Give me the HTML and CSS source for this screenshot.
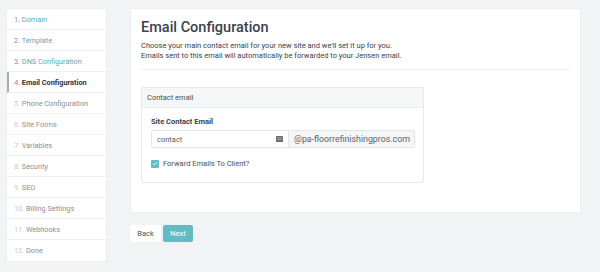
FILE: index.html
```html
<!DOCTYPE html>
<html>
<head>
<meta charset="utf-8">
<link rel="stylesheet" href="styles.css">
</head>
<body>
<div class="page">
  <ul class="steps">
    <li class="step done"><span class="num">1.</span> Domain</li>
    <li class="step done"><span class="num">2.</span> Template</li>
    <li class="step done"><span class="num">3.</span> DNS Configuration</li>
    <li class="step active"><span class="num">4.</span> Email Configuration</li>
    <li class="step"><span class="num">5.</span> Phone Configuration</li>
    <li class="step"><span class="num">6.</span> Site Forms</li>
    <li class="step"><span class="num">7.</span> Variables</li>
    <li class="step"><span class="num">8.</span> Security</li>
    <li class="step"><span class="num">9.</span> SEO</li>
    <li class="step"><span class="num">10.</span> Billing Settings</li>
    <li class="step"><span class="num">11.</span> Webhooks</li>
    <li class="step"><span class="num">12.</span> Done</li>
  </ul>
  <div class="main">
    <div class="panel">
      <h1 class="title">Email Configuration</h1>
      <p class="desc">Choose your main contact email for your new site and we'll set it up for you.<br>Emails sent to this email will automatically be forwarded to your Jensen email.</p>
      <hr class="sep">
      <div class="box">
        <div class="box-head">Contact email</div>
        <div class="box-body">
          <div class="label">Site Contact Email</div>
          <div class="input-row">
            <div class="input">
              <span class="value">contact</span>
              <svg class="key" width="7" height="6" viewBox="0 0 7 6"><rect x="0" y="0" width="7" height="6" rx="0.5" fill="#6b6f75"/><rect x="1" y="1.6" width="5" height="0.6" fill="#b9bcc0"/><rect x="1" y="3.4" width="5" height="0.6" fill="#b9bcc0"/></svg>
            </div>
            <div class="addon">@pa-floorrefinishingpros.com</div>
          </div>
          <label class="check">
            <span class="box-check"><svg width="6" height="5" viewBox="0 0 6 5"><path d="M1 2.6 L2.4 3.8 L5 1.2" fill="none" stroke="#fff" stroke-width="0.9"/></svg></span>
            Forward Emails To Client?
          </label>
        </div>
      </div>
    </div>
    <div class="buttons">
      <button class="btn back">Back</button>
      <button class="btn next">Next</button>
    </div>
  </div>
</div>
</body>
</html>
```
FILE: styles.css
```css
html, body {
  margin: 0;
  padding: 0;
  background: #f2f3f5;
  font-family: Roboto, "Liberation Sans", Arial, sans-serif;
}
.page {
  display: flex;
  align-items: flex-start;
  gap: 23px;
  padding: 8px 0 0 6px;
}
.steps {
  list-style: none;
  margin: 0;
  padding: 0;
  width: 101px;
  background: #fff;
  border: 1px solid #eceef0;
  box-sizing: border-box;
}
.step {
  height: 21px;
  line-height: 21px;
  font-size: 7.3px;
  color: #8a8f96;
  padding-left: 7px;
  border-bottom: 1px solid #eef0f2;
  box-sizing: border-box;
  white-space: nowrap;
}
.step:last-child { border-bottom: none; }
.step .num { color: #c7cacf; }
.step.done { color: #5fa9b2; }
.step.done .num { color: #8a8f96; }
.step.active {
  color: #2f343b;
  font-weight: 700;
  border-left: 2px solid #a8acb2;
  padding-left: 5px;
}
.step.active .num { color: #8a8f96; font-weight: 400; }
.main {
  width: 451px;
  display: flex;
  flex-direction: column;
  gap: 12px;
}
.panel {
  background: #fff;
  border: 1px solid #eceef0;
  box-sizing: border-box;
  height: 205px;
  padding: 8px 10px 0;
}
.title {
  margin: 0;
  font-size: 14.5px;
  font-weight: 500;
  color: #3a4150;
  line-height: 22px;
}
.desc {
  margin: 2px 0 0;
  font-size: 7.5px;
  line-height: 10px;
  color: #3a4150;
}
.sep {
  border: none;
  border-top: 1px solid #eef0f2;
  margin: 8px 0 0;
}
.box {
  margin-top: 17px;
  width: 283px;
  border: 1px solid #e6e8eb;
  border-radius: 2px;
  box-sizing: border-box;
}
.box-head {
  height: 19px;
  line-height: 19px;
  background: #f5f6f7;
  font-size: 7.5px;
  color: #4a505a;
  padding-left: 5px;
  border-bottom: 1px solid #eceef0;
}
.box-body {
  padding: 8px 8px 14px 9px;
}
.label {
  font-size: 7.5px;
  font-weight: 700;
  color: #3a4150;
  line-height: 12px;
}
.input-row {
  display: flex;
  margin-top: 2px;
  height: 18px;
  width: 264px;
}
.input {
  width: 138px;
  border: 1px solid #e3e5e8;
  border-radius: 2px 0 0 2px;
  box-sizing: border-box;
  display: flex;
  align-items: center;
  justify-content: space-between;
  padding: 0 5px;
  background: #fff;
}
.value {
  font-size: 7.5px;
  color: #555a62;
}
.key { display: block; }
.addon {
  flex: 1;
  background: #f5f6f7;
  border: 1px solid #e3e5e8;
  border-left: none;
  border-radius: 0 2px 2px 0;
  font-size: 8.8px;
  color: #5d626a;
  line-height: 16px;
  padding-left: 5px;
  white-space: nowrap;
  overflow: hidden;
}
.check {
  display: flex;
  align-items: center;
  gap: 4px;
  margin-top: 11px;
  font-size: 7.5px;
  color: #4a505a;
}
.box-check {
  width: 8px;
  height: 8px;
  background: #62bcc4;
  border-radius: 1px;
  display: flex;
  align-items: center;
  justify-content: center;
}
.box-check svg { display: block; }
.buttons {
  display: flex;
  gap: 2px;
}
.btn {
  height: 17px;
  border: none;
  border-radius: 2px;
  font-family: inherit;
  font-size: 7.5px;
  padding: 0;
  width: 31px;
}
.back {
  background: #fff;
  color: #4a505a;
}
.next {
  background: #62bcc4;
  color: #fff;
  width: 30px;
}
```
